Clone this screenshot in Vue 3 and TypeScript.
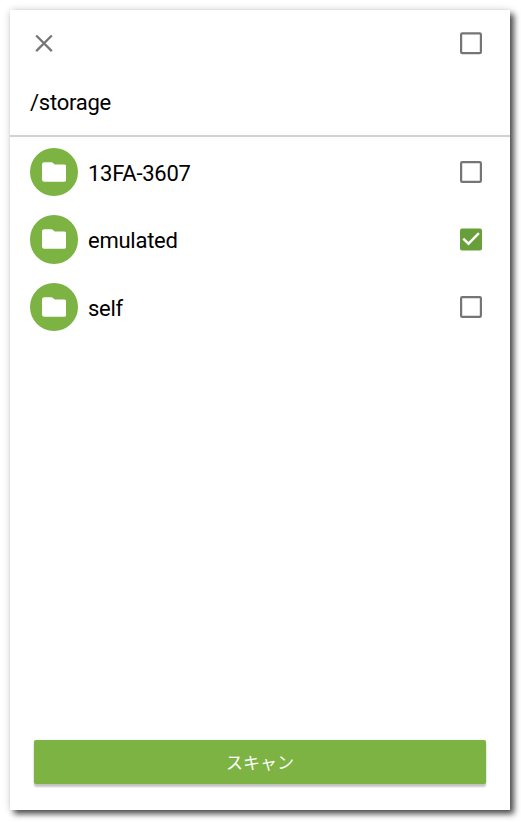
<script setup lang="ts">
import { ref } from 'vue'

interface Folder {
  name: string
  checked: boolean
}

const path = '/storage'
const allChecked = ref(false)
const folders = ref<Folder[]>([
  { name: '13FA-3607', checked: false },
  { name: 'emulated', checked: true },
  { name: 'self', checked: false },
])

function toggleAll(): void {
  allChecked.value = !allChecked.value
  folders.value.forEach((f) => (f.checked = allChecked.value))
}
</script>

<template>
  <div class="page">
    <main class="panel">
      <header class="header">
        <div class="toolbar">
          <svg class="close" viewBox="0 0 18 18">
            <path d="M1.2 1.5 16.8 17.1M16.8 1.5 1.2 17.1" />
          </svg>
          <svg class="check" viewBox="0 0 22 22" @click="toggleAll">
            <rect v-if="!allChecked" class="box" x="1.1" y="1.3" width="19.8" height="19.8" rx="1.2" />
            <template v-else>
              <rect class="fill" width="22" height="22" rx="2" />
              <path class="tick" d="M3.2 10.7 8.5 15.7 18.9 5.2" />
            </template>
          </svg>
        </div>
        <div class="path">{{ path }}</div>
      </header>
      <ul class="list">
        <li v-for="folder in folders" :key="folder.name" class="row" @click="folder.checked = !folder.checked">
          <span class="avatar">
            <svg class="folder" viewBox="0 0 25 20">
              <path d="M2.4 0H9.8Q10.5 0 11 .5L12.9 2.4H22.5Q25 2.4 25 4.8V17.6Q25 20 22.5 20H2.4Q0 20 0 17.6V2.4Q0 0 2.4 0Z" />
            </svg>
          </span>
          <span class="name">{{ folder.name }}</span>
          <svg class="check" viewBox="0 0 22 22">
            <rect v-if="!folder.checked" class="box" x="1.1" y="1.1" width="19.8" height="19.8" rx="1.2" />
            <template v-else>
              <rect class="fill" y="0.4" width="22" height="22" rx="2" />
              <path class="tick" d="M3.2 10.7 8.5 15.7 18.9 5.2" />
            </template>
          </svg>
        </li>
      </ul>
      <button class="scan" type="button">スキャン</button>
    </main>
  </div>
</template>

<style>
body {
  background: #fff;
}
</style>

<style scoped>
.page {
  box-sizing: border-box;
  height: 822px;
  padding: 10px 11px 12px 10px;
  overflow: hidden;
  font-family: Roboto, 'Noto Sans CJK JP', sans-serif;
  color: #000;
}
.panel {
  box-sizing: border-box;
  height: 800px;
  display: flex;
  flex-direction: column;
  background: #fff;
  box-shadow: 4px 4px 6px rgba(0, 0, 0, 0.68), 0 0 8px rgba(0, 0, 0, 0.14);
}
.header {
  box-sizing: border-box;
  height: 127px;
  border-bottom: 2px solid #d2d2d2;
}
.toolbar {
  display: flex;
  justify-content: space-between;
  align-items: center;
  height: 66px;
  padding: 0 28px 0 25px;
}
.close {
  width: 18px;
  height: 18px;
  fill: none;
  stroke: #757575;
  stroke-width: 2.3;
}
.path {
  padding: 1px 0 0 20px;
  font-size: 22px;
  line-height: 52px;
  letter-spacing: -0.25px;
}
.list {
  margin: 0;
  padding: 1px 0 0;
  list-style: none;
}
.row {
  display: flex;
  align-items: center;
  height: 67.5px;
  box-sizing: border-box;
  padding: 0 28px 0 19.75px;
}
.avatar {
  display: flex;
  align-items: center;
  justify-content: center;
  width: 48.5px;
  height: 48.5px;
  border-radius: 50%;
  background: #7cb342;
}
.folder {
  width: 24.5px;
  height: 20px;
  fill: #fff;
}
.name {
  flex: 1;
  padding: 3.5px 0 0 9.75px;
  font-size: 22px;
  line-height: 28px;
  letter-spacing: -0.25px;
}
.check {
  width: 22px;
  height: 22px;
  overflow: visible;
}
.box {
  fill: none;
  stroke: #757575;
  stroke-width: 2.2;
}
.fill {
  fill: #689f38;
}
.tick {
  fill: none;
  stroke: #fff;
  stroke-width: 2.4;
}
.scan {
  height: 44px;
  margin: auto 24px 26px;
  padding: 0 0 2px;
  border: 0;
  border-radius: 2px;
  background: #7cb342;
  box-shadow: 0 3px 2px rgba(0, 0, 0, 0.22), 0 0 2px rgba(0, 0, 0, 0.12);
  color: #fff;
  font-family: 'Noto Sans CJK JP', sans-serif;
  font-size: 17px;
  font-weight: 400;
}
</style>
